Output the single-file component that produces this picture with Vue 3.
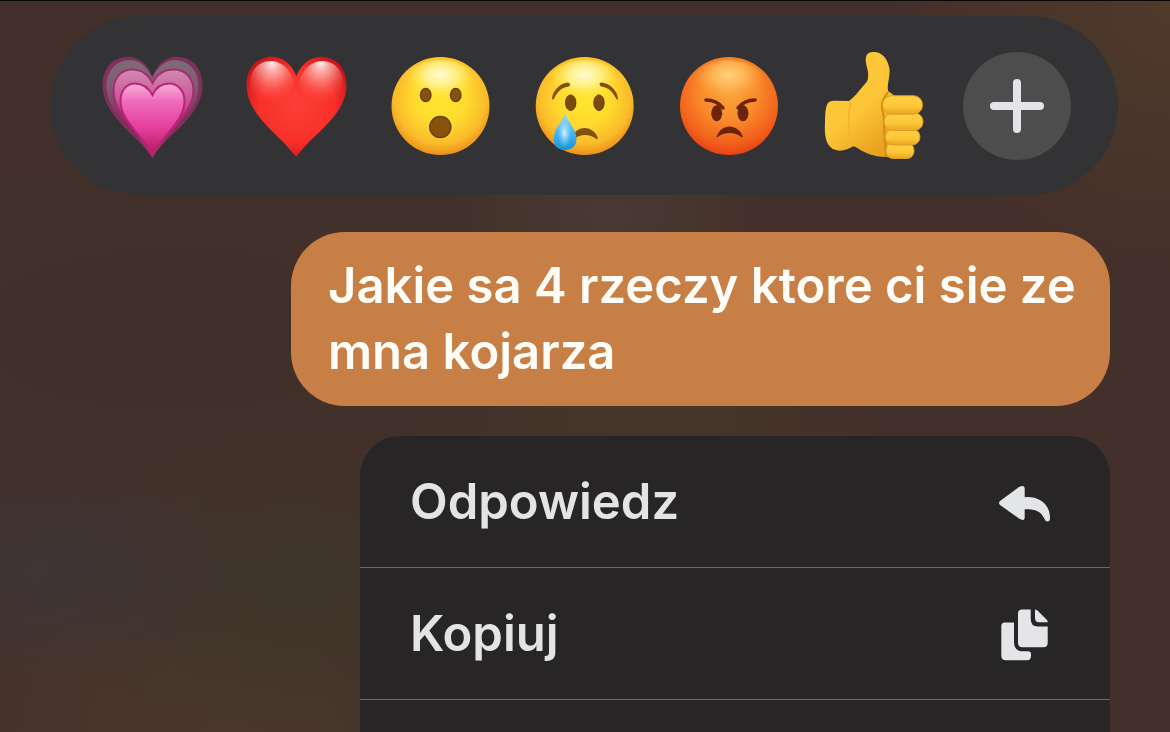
<template>
  <main class="screen">
    <div class="reactions" role="toolbar" aria-label="Reakcje">
      <button
        v-for="name in reactions"
        :key="name"
        class="reaction"
        type="button"
        :aria-label="name"
        :aria-pressed="selected === name"
        @click="toggleReaction(name)"
      >
        <svg v-if="name === 'growing heart'" viewBox="0 0 108 108">
          <defs>
            <linearGradient id="outer" x1="0" y1="0" x2="0" y2="1">
              <stop offset="0" stop-color="#7d6b77" />
              <stop offset="0.3" stop-color="#805a73" />
              <stop offset="0.6" stop-color="#86305f" />
              <stop offset="1" stop-color="#a51a55" />
            </linearGradient>
            <linearGradient id="middle" x1="0" y1="0" x2="0" y2="1">
              <stop offset="0" stop-color="#d08bb2" />
              <stop offset="0.3" stop-color="#cb5c9b" />
              <stop offset="0.6" stop-color="#c22a7d" />
              <stop offset="1" stop-color="#b81c61" />
            </linearGradient>
            <linearGradient id="inner" x1="0" y1="0" x2="0" y2="1">
              <stop offset="0" stop-color="#f9b0da" />
              <stop offset="0.25" stop-color="#ef6cbb" />
              <stop offset="0.65" stop-color="#e43c9c" />
              <stop offset="1" stop-color="#b81a5a" />
            </linearGradient>
          </defs>
          <path :d="heart" fill="#80305d" />
          <path :d="heart" fill="url(#outer)" transform="translate(4.3 4) scale(.92)" />
          <path
            d="M54.5 31C50 22 42 17.5 34 17.5C23 17.5 15.5 26 15.5 39C15.5 60 38 76 54.5 104C71 76 95.5 60 95.5 39C95.5 26 87 17.5 76 17.5C67 17.5 59 22 54.5 31Z"
            fill="url(#middle)"
            stroke="#a82a70"
            stroke-width="2"
          />
          <path
            d="M54.5 43C50 35 44 31.5 37 31.5C28 31.5 22.5 39 22.5 49C22.5 68 41 80 54.5 102C68 80 86.5 68 86.5 49C86.5 39 80 31.5 71 31.5C64 31.5 58 35 54.5 43Z"
            fill="url(#inner)"
            stroke="#b82478"
            stroke-width="2"
          />
        </svg>

        <svg v-else-if="name === 'red heart'" viewBox="0 0 108 108">
          <defs>
            <radialGradient id="red" cx="0.5" cy="0.48" r="0.58">
              <stop offset="0" stop-color="#fb4038" />
              <stop offset="0.65" stop-color="#f92f2a" />
              <stop offset="1" stop-color="#c81519" />
            </radialGradient>
            <radialGradient id="shine" cx="0.5" cy="0.05" r="0.8">
              <stop offset="0" stop-color="#fff" stop-opacity="0.9" />
              <stop offset="0.4" stop-color="#ffb5ae" stop-opacity="0.6" />
              <stop offset="1" stop-color="#fb4038" stop-opacity="0" />
            </radialGradient>
          </defs>
          <path :d="heart" fill="url(#red)" />
          <path
            d="M52 29C47 15 38 9 29 9C17 9 8 18 8 32C8 44 14 56 24 60C36 58 49 46 52 29Z"
            fill="url(#shine)"
          />
          <path
            d="M57 29C62 15 71 9 80 9C92 9 101 18 101 32C101 44 95 56 85 60C73 58 60 46 57 29Z"
            fill="url(#shine)"
          />
        </svg>

        <svg v-else-if="name === 'surprised'" viewBox="0 0 108 108">
          <defs>
            <radialGradient id="yellow" cx="0.5" cy="0.42" r="0.6">
              <stop offset="0" stop-color="#ffe52d" />
              <stop offset="0.45" stop-color="#fedb2e" />
              <stop offset="0.78" stop-color="#fabb2a" />
              <stop offset="1" stop-color="#e98916" />
            </radialGradient>
            <radialGradient id="glow" cx="0.5" cy="0.3" r="0.5">
              <stop offset="0" stop-color="#fffbd8" />
              <stop offset="0.45" stop-color="#fff6a0" stop-opacity="0.75" />
              <stop offset="1" stop-color="#ffe52d" stop-opacity="0" />
            </radialGradient>
          </defs>
          <circle cx="54.5" cy="54" r="49" fill="url(#yellow)" />
          <ellipse cx="54.5" cy="33" rx="37" ry="25" fill="url(#glow)" />
          <g fill="#87520b" stroke="#69400b" stroke-width="1.5">
            <ellipse cx="39.7" cy="43" rx="5.2" ry="6.5" />
            <ellipse cx="69.7" cy="43" rx="5.2" ry="6.5" />
            <circle cx="54.3" cy="75" r="10.5" />
          </g>
        </svg>

        <svg v-else-if="name === 'crying'" viewBox="0 0 108 108">
          <defs>
            <linearGradient id="tear" x1="0" y1="0" x2="0" y2="1">
              <stop offset="0" stop-color="#9edcf7" />
              <stop offset="0.5" stop-color="#4fb8f1" />
              <stop offset="1" stop-color="#1593dd" />
            </linearGradient>
            <radialGradient id="drop" cx="0.5" cy="0.5" r="0.5">
              <stop offset="0" stop-color="#e7fbff" stop-opacity="0.9" />
              <stop offset="1" stop-color="#8bdcff" stop-opacity="0" />
            </radialGradient>
          </defs>
          <circle cx="54.7" cy="54" r="49" fill="url(#yellow)" />
          <ellipse cx="54.5" cy="33" rx="37" ry="25" fill="url(#glow)" />
          <g fill="#7c4b0b" stroke="#643d0a" stroke-width="1">
            <ellipse cx="40.7" cy="50.7" rx="5.2" ry="7.8" />
            <ellipse cx="69" cy="50.7" rx="5.2" ry="7.8" />
          </g>
          <g fill="#81500b">
            <path d="M22 47C22 39 31 30.5 38 30.5Q41.5 31.5 39 34.5C32 35 27 40 24 46.5Q23 48 22 47Z" />
            <path d="M88 47C88 39 79 30.5 71 30.5Q68 31.5 71 34.5C78 35 83 40 86 46.5Q87 48 88 47Z" />
            <path d="M43 84C47 73 63 73 68 86Q67 88 65 86C59 82 50 82 44 87Z" />
          </g>
          <path
            d="M35 60C34 69 23.5 76 23.5 87C23.5 94 28 98 35 98C42 98 46.5 94 46.5 87C46.5 76 36 69 35 60Z"
            fill="url(#tear)"
          />
          <ellipse cx="34.5" cy="81" rx="7" ry="15" fill="url(#drop)" />
        </svg>

        <svg v-else-if="name === 'angry'" viewBox="0 0 108 108">
          <defs>
            <radialGradient id="orange" cx="0.5" cy="0.36" r="0.66">
              <stop offset="0" stop-color="#fba43c" />
              <stop offset="0.45" stop-color="#f88a2b" />
              <stop offset="0.8" stop-color="#f2601b" />
              <stop offset="1" stop-color="#e63e12" />
            </radialGradient>
            <radialGradient id="warm" cx="0.5" cy="0.3" r="0.5">
              <stop offset="0" stop-color="#ffd07a" />
              <stop offset="0.45" stop-color="#ffc060" stop-opacity="0.75" />
              <stop offset="1" stop-color="#fba43c" stop-opacity="0" />
            </radialGradient>
          </defs>
          <circle cx="54" cy="54" r="49" fill="url(#orange)" />
          <ellipse cx="54" cy="33" rx="37" ry="25" fill="url(#warm)" />
          <g fill="#6d220a">
            <ellipse cx="41.7" cy="61.3" rx="5.5" ry="8" />
            <ellipse cx="68" cy="61.3" rx="5.5" ry="8" />
            <path d="M41.5 85C46 71 63 71 68 85Q67 86 65 84C59 80 50 80 44 84Q42 86 41.5 85Z" />
          </g>
          <g fill="none" stroke="#6d220a" stroke-width="3.5" stroke-linecap="round">
            <path d="M31 48C38 48 44 51 48 56" />
            <path d="M80 48C72 48 67 51 63 56" />
          </g>
        </svg>

        <svg v-else viewBox="0 0 108 108">
          <defs>
            <linearGradient id="hand" x1="0" y1="0" x2="0.6" y2="1">
              <stop offset="0" stop-color="#fdc837" />
              <stop offset="0.6" stop-color="#fdc638" />
              <stop offset="1" stop-color="#e9a11f" />
            </linearGradient>
            <linearGradient id="finger" x1="0" y1="0" x2="0" y2="1">
              <stop offset="0" stop-color="#ffd044" />
              <stop offset="0.6" stop-color="#fcc638" />
              <stop offset="1" stop-color="#e8a524" />
            </linearGradient>
          </defs>
          <path
            d="M6 71C6 60 7 52 10 50Q12 48.5 17 48.7L30 49C36 45 41 37 46 32C49 29 49.5 26 49 20C48 14 46 10 47 5C48 1 51 0 55 0C63 0 69 7 70.5 17C71 25 68 32 69 39L76 44L80 100Q76 107 67 105C54 105 46 101 35 94C29 97 23 100 17 98C8 96 5 86 6 71Z"
            fill="url(#hand)"
          />
          <path
            d="M31 50C32 54 29 60 30 68C30 79 29 87 36 94"
            fill="none"
            stroke="#f3b62f"
            stroke-width="2"
          />
          <path
            d="M69 40C68 43 63 47 63 53C62 60 66 62 65 69C65 76 66 90 67 105"
            fill="none"
            stroke="#cf8d18"
            stroke-width="2"
          />
          <g fill="url(#finger)" stroke="#dd9c22" stroke-width="1">
            <rect x="67" y="91" width="28" height="15.5" rx="7" />
            <rect x="66" y="77" width="35" height="16" rx="8" />
            <rect x="65" y="61" width="39" height="17.5" rx="8.5" />
            <rect x="63.5" y="43.7" width="40" height="18.5" rx="9" />
          </g>
        </svg>
      </button>

      <button class="reaction more" type="button" aria-label="Więcej reakcji">
        <svg viewBox="0 0 108 108">
          <path d="M54 31V77M31 54H77" stroke="#e4e4e8" stroke-width="8" stroke-linecap="round" />
        </svg>
      </button>
    </div>

    <p class="bubble">{{ message }}</p>

    <div class="menu" role="menu">
      <button
        v-for="item in menuItems"
        :key="item.label"
        class="menu-item"
        type="button"
        role="menuitem"
      >
        <span>{{ item.label }}</span>
        <svg class="menu-icon" viewBox="0 0 54 54" aria-hidden="true">
          <path v-for="d in item.icon" :key="d" :d="d" />
        </svg>
      </button>
    </div>
  </main>
</template>

<script setup>
import { ref } from "vue";

const message = "Jakie sa 4 rzeczy ktore ci sie ze mna kojarza";
const selected = ref(null);

const reactions = [
  "growing heart",
  "red heart",
  "surprised",
  "crying",
  "angry",
  "thumbs up",
];

// shared by both hearts
const heart =
  "M54.3 24C49 11 40 4.7 30 4.7C15 4.7 4.5 16 4.5 33C4.5 55 22 71 38 87C46 95 50 100 54.3 105C58 100 62 95 70 87C87 71 104.5 55 104.5 33C104.5 16 94 4.7 79 4.7C69 4.7 60 11 54.3 24Z";

const menuItems = [
  {
    label: "Odpowiedz",
    icon: [
      "M4 26L23 12Q28.7 9 28.7 14V22.2C43 21 54 29 54 43Q54 46.5 51.5 46.5Q49.5 46.5 48.5 44C45 36 39 34 28.7 34.2V42Q28.7 47 23 43.5L4 30Q2 28 4 26Z",
    ],
  },
  {
    label: "Kopiuj",
    icon: [
      "M9 15.5H18V35Q18 44.2 27 44.2H32Q35 44.2 35 47V49Q35 53.2 31 53.2H10Q5.3 53.2 5.3 48.5V19Q5.3 15.5 9 15.5Z",
      "M26 2.5H34.7V12Q34.7 19.5 42 19.5H51.7V36Q51.7 40.2 47.5 40.2H26.5Q22 40.2 22 36V6.5Q22 2.5 26 2.5Z",
      "M39 2.5Q40.5 2.5 42 4L50.5 12.5Q52 14 51.7 15.2H43Q39 15.2 39 11Z",
    ],
  },
];

const toggleReaction = (name) => {
  selected.value = selected.value === name ? null : name;
};
</script>

<style>
body {
  margin: 0;
  background: #44312a;
}
</style>

<style scoped>
.screen {
  box-sizing: border-box;
  display: flex;
  flex-direction: column;
  align-items: flex-end;
  min-height: 100vh;
  padding: 15px 60px 0 50px;
  border-top: 1px solid #0b0706;
  font-family: Inter, "Liberation Sans", sans-serif;
  font-weight: 600;
  font-size: 49px;
  line-height: 66px;
  background:
    radial-gradient(circle at 100% 0, #4f3a2b, transparent 20%),
    radial-gradient(ellipse at 3% 78%, #3e3536, transparent 14%),
    radial-gradient(ellipse at 25% 80%, #3e3529, transparent 22%),
    radial-gradient(ellipse at 52% 29%, #4a3a33, transparent 18%),
    radial-gradient(ellipse at 55% 57%, #443629, transparent 26%),
    radial-gradient(ellipse at 20% 100%, #4c382c, transparent 24%),
    radial-gradient(ellipse at 15% 45%, #40302a, transparent 40%),
    #44302a;
}

button {
  margin: 0;
  padding: 0;
  border: 0;
  background: none;
  font: inherit;
  color: inherit;
  cursor: pointer;
}

svg {
  display: block;
}

.reactions {
  box-sizing: border-box;
  display: flex;
  justify-content: space-between;
  align-self: stretch;
  margin-right: -8px;
  padding: 36px 47px 35px 48px;
  border-radius: 90px;
  background: #333335;
}

.reaction {
  width: 108px;
  height: 108px;
  border-radius: 50%;
}

.more {
  background: #4d4d4d;
}

.bubble {
  box-sizing: border-box;
  max-width: 819px;
  margin: 37px 0 30px;
  padding: 21px 30px 21px 37px;
  border-radius: 54px;
  background: #c87f46;
  color: #fffdf8;
}

.menu {
  flex: 1;
  width: 750px;
  max-width: 100%;
  border-radius: 40px 40px 0 0;
  background: #272526;
  color: #e4e4e7;
}

.menu-item {
  box-sizing: border-box;
  display: flex;
  align-items: center;
  justify-content: space-between;
  width: 100%;
  height: 132px;
  padding: 0 60px 0 50px;
  border-bottom: 1px solid #69676a;
}

.menu-icon {
  width: 54px;
  height: 54px;
  fill: #e4e5e9;
}
</style>
